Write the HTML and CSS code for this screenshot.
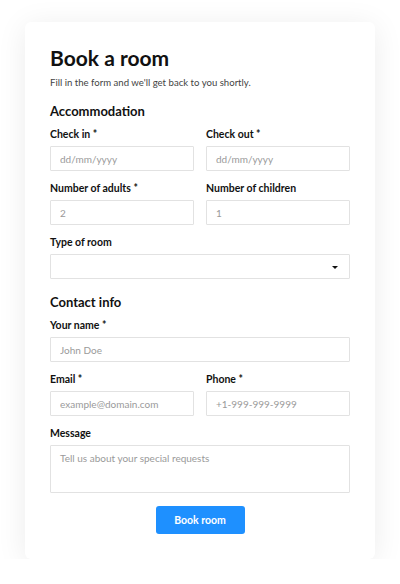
FILE: index.html
```html
<!DOCTYPE html>
<html lang="en">
<head>
    <meta charset="UTF-8">
    <meta name="viewport" content="width=device-width, initial-scale=1.0">
    <title>Book a room</title>
    <link rel="stylesheet" href="styles.css">
</head>
<body>
    <div class="card">
        <h1>Book a room</h1>
        <p class="subtitle">Fill in the form and we'll get back to you shortly.</p>

        <h2>Accommodation</h2>
        <div class="row">
            <div class="field">
                <label>Check in *</label>
                <input type="text" placeholder="dd/mm/yyyy">
            </div>
            <div class="field">
                <label>Check out *</label>
                <input type="text" placeholder="dd/mm/yyyy">
            </div>
        </div>
        <div class="row">
            <div class="field">
                <label>Number of adults *</label>
                <input type="text" placeholder="2">
            </div>
            <div class="field">
                <label>Number of children</label>
                <input type="text" placeholder="1">
            </div>
        </div>
        <div class="field">
            <label>Type of room</label>
            <div class="select">
                <span class="arrow"></span>
            </div>
        </div>

        <h2 class="section">Contact info</h2>
        <div class="field">
            <label>Your name *</label>
            <input type="text" placeholder="John Doe">
        </div>
        <div class="row">
            <div class="field">
                <label>Email *</label>
                <input type="text" placeholder="example@domain.com">
            </div>
            <div class="field">
                <label>Phone *</label>
                <input type="text" placeholder="+1-999-999-9999">
            </div>
        </div>
        <div class="field">
            <label>Message</label>
            <textarea placeholder="Tell us about your special requests"></textarea>
        </div>

        <div class="actions">
            <button class="btn">Book room</button>
        </div>
    </div>
</body>
</html>
```

FILE: styles.css
```css
body {
    font-family: Lato, "Noto Sans", sans-serif;
    margin: 0;
    padding: 22px 0 0;
    background: #ffffff;
    color: #111;
}
.card {
    width: 300px;
    margin: 0 auto;
    padding: 23px 25px 25px;
    background: #fff;
    border-radius: 6px;
    box-shadow: 0 4px 30px rgba(0, 0, 0, 0.08);
}
h1 {
    font-size: 21px;
    line-height: 26px;
    margin: 0 0 5px;
    font-weight: 700;
}
.subtitle {
    font-size: 9.6px;
    line-height: 14px;
    margin: 0 0 13px;
    color: #444;
}
h2 {
    font-size: 13px;
    line-height: 17px;
    margin: 0 0 8px;
    font-weight: 700;
}
h2.section {
    margin-top: 15px;
    margin-bottom: 8px;
}
.row {
    display: grid;
    grid-template-columns: 1fr 1fr;
    gap: 12px;
}
.field {
    margin-bottom: 11px;
}
label {
    display: block;
    font-size: 10.5px;
    line-height: 12px;
    font-weight: 700;
    margin-bottom: 6px;
}
input, textarea, .select {
    display: block;
    width: 100%;
    box-sizing: border-box;
    height: 25px;
    margin: 0;
    padding: 0 9px;
    border: 1px solid #e2e2e2;
    border-radius: 1px;
    font-family: inherit;
    font-size: 10px;
    background: #fff;
}
input::placeholder, textarea::placeholder {
    color: #9a9a9a;
}
.select {
    position: relative;
}
.arrow {
    position: absolute;
    right: 11px;
    top: 11px;
    border-left: 3px solid transparent;
    border-right: 3px solid transparent;
    border-top: 3px solid #111;
}
textarea {
    height: 48px;
    padding-top: 6px;
    resize: none;
}
.actions {
    text-align: center;
    margin-top: 13px;
}
.btn {
    display: inline-block;
    width: 89px;
    height: 28px;
    margin: 0;
    border: none;
    border-radius: 3px;
    background-color: #1e90ff;
    color: #fff;
    font-family: inherit;
    font-size: 10.5px;
    font-weight: 700;
    cursor: pointer;
}
```
